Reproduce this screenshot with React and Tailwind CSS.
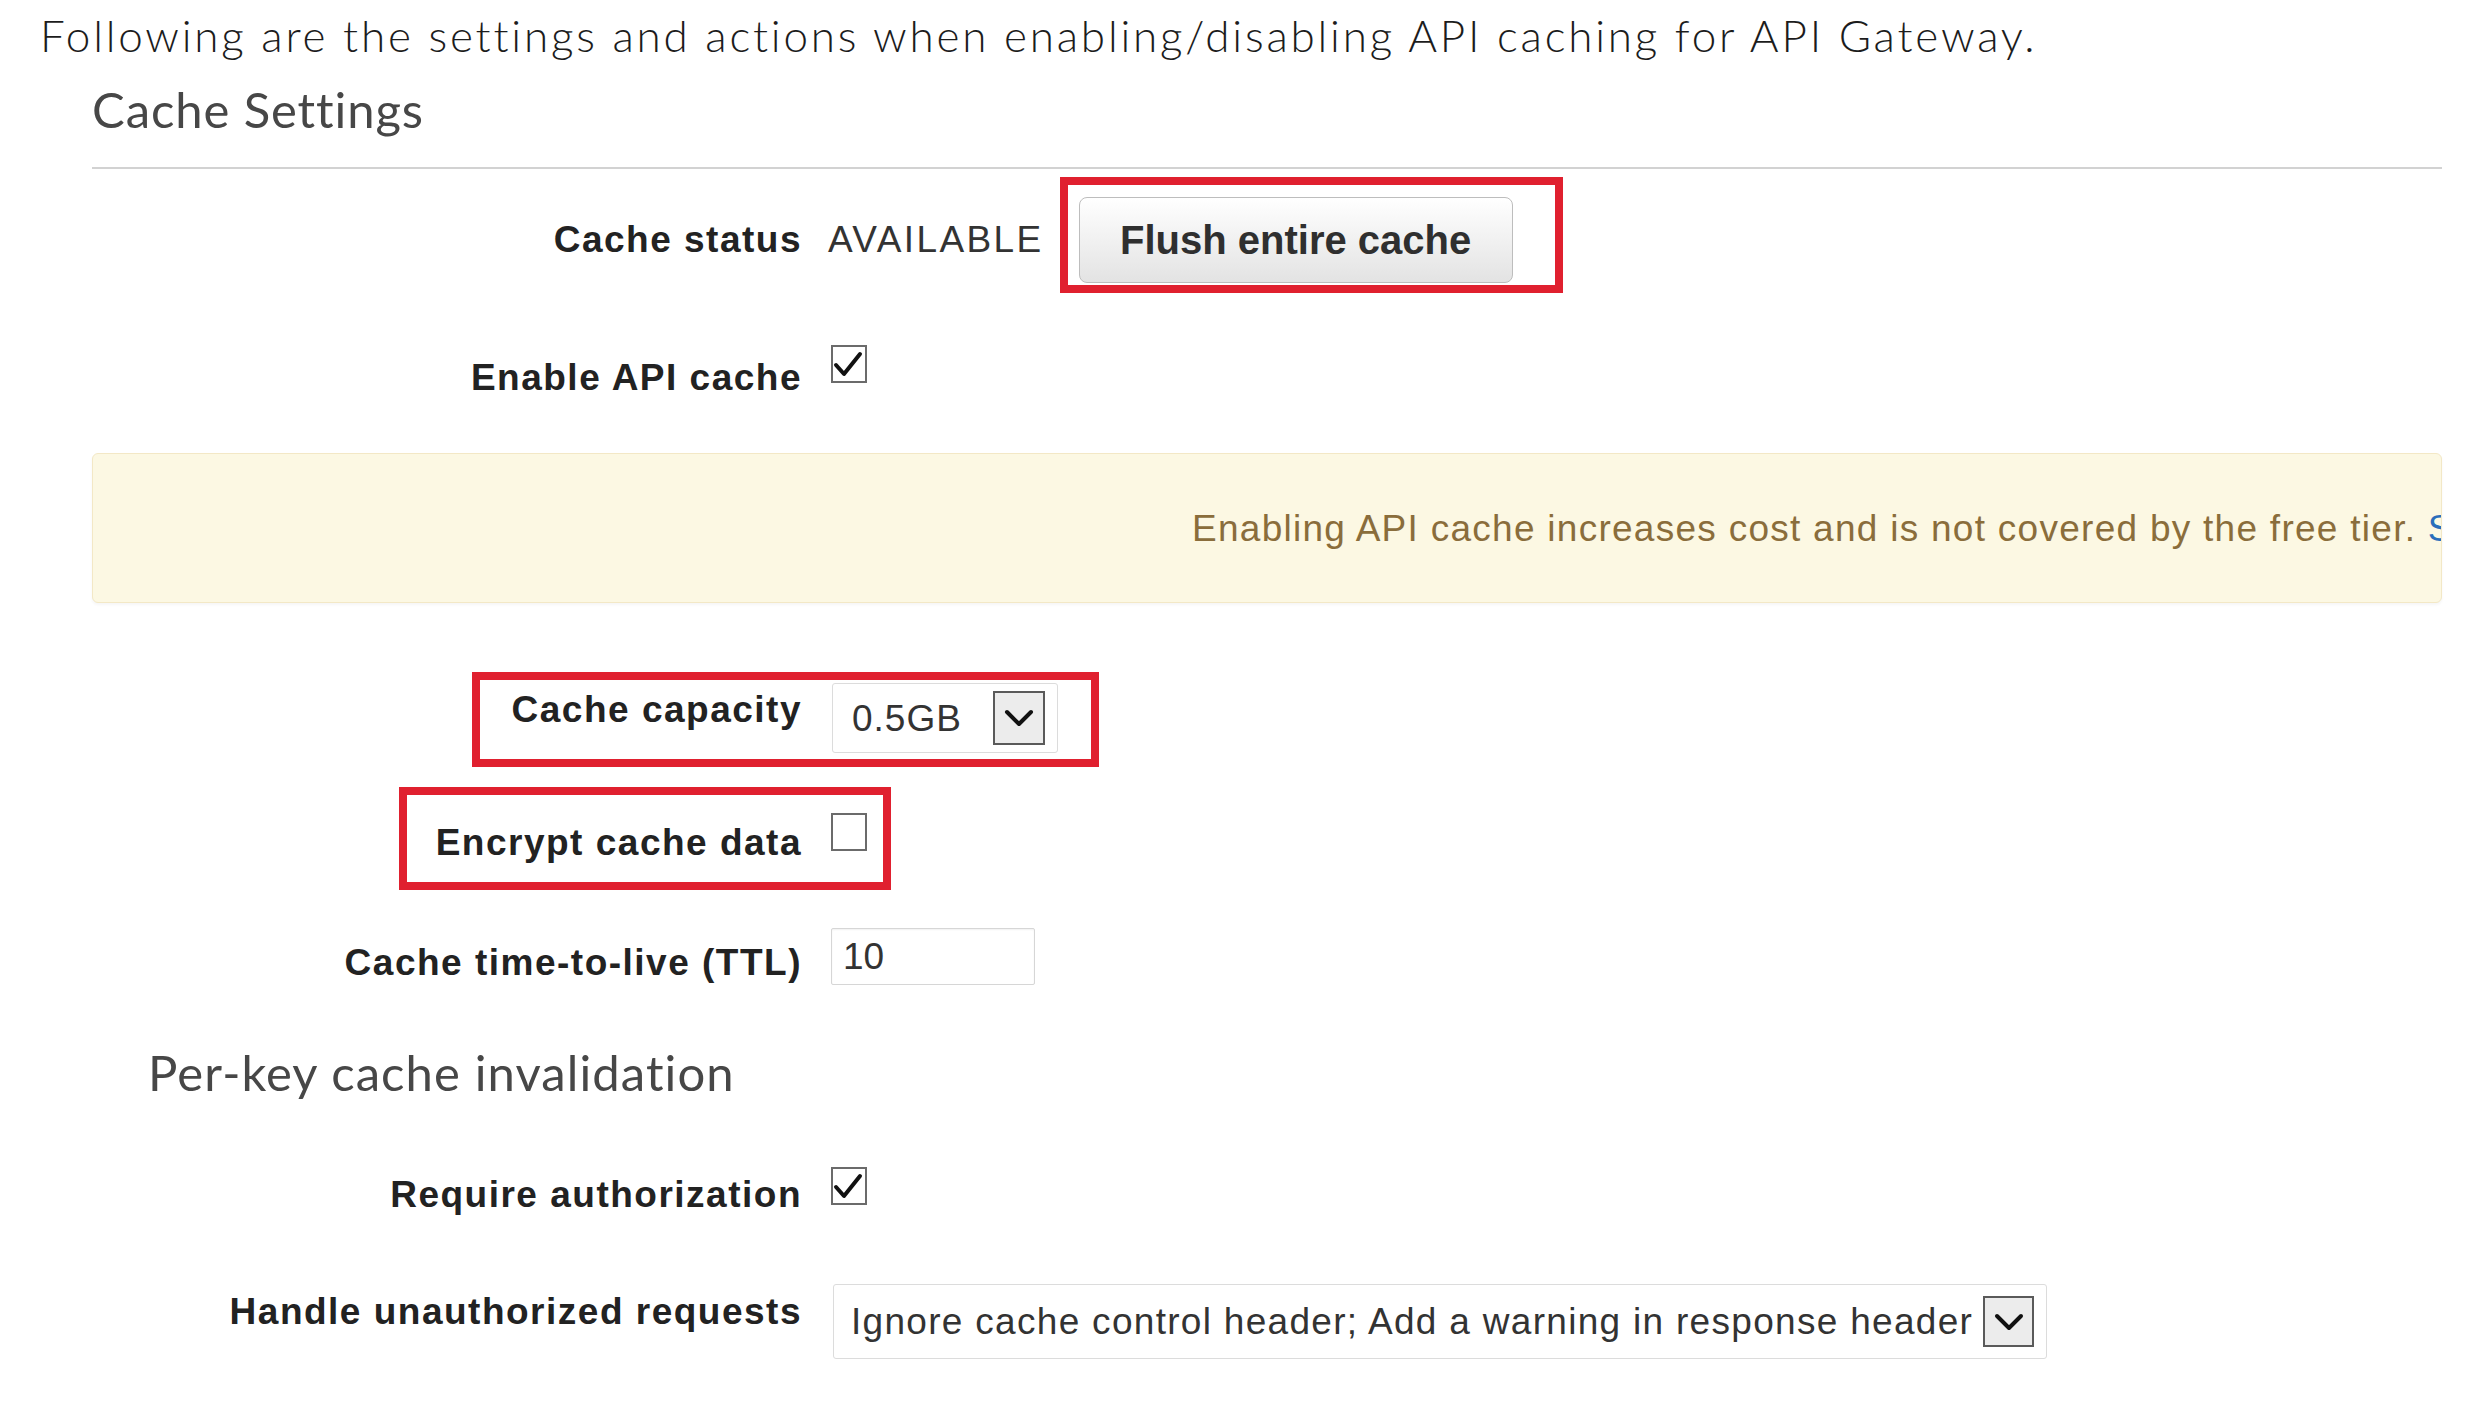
import React from "react";

const sans = "font-['Liberation_Sans',Arial,sans-serif]";
const lato = "font-['Lato',sans-serif]";

function Check({ checked }) {
  return (
    <div className="w-[36px] h-[38px] border-2 border-[#6b6b6b] bg-white">
      {checked && (
        <svg width="32" height="34" viewBox="0 0 32 34">
          <path d="M3 18 L11 27 L27 7" fill="none" stroke="#111" strokeWidth="4" strokeLinecap="round" strokeLinejoin="round" />
        </svg>
      )}
    </div>
  );
}

function Arrow({ w, h }) {
  return (
    <div className={`flex items-center justify-center border-2 border-[#5a5a5a] bg-[#ececec] ${w} ${h}`}>
      <svg width="34" height="22" viewBox="0 0 34 22">
        <path d="M5 5 L17 17 L29 5" fill="none" stroke="#111" strokeWidth="4" strokeLinecap="round" strokeLinejoin="round" />
      </svg>
    </div>
  );
}

function Label({ children, mt }) {
  return (
    <div className={`w-[710px] shrink-0 text-right font-bold text-[37px] leading-none tracking-[1.5px] text-[#222] ${mt}`}>
      {children}
    </div>
  );
}

export default function App() {
  return (
    <div className={`w-[2489px] h-[1401px] bg-white overflow-hidden ${sans}`}>
      {/* intro line */}
      <p className={`${lato} font-light pl-[40px] pt-[13px] text-[44px] leading-none tracking-[2.8px] text-[#1c1c1c] whitespace-nowrap`}>
        Following are the settings and actions when enabling/disabling API caching for API Gateway.
      </p>

      <div className="ml-[92px] w-[2350px]">
        {/* heading */}
        <div className="mt-[28px] pb-[33px] border-b-2 border-[#d2d2d2]">
          <h2 className={`${lato} text-[49px] leading-none tracking-[0.9px] text-[#474747]`}>Cache Settings</h2>
        </div>

        {/* cache status */}
        <div className="relative flex items-start h-[131px]">
          <Label mt="mt-[52px]">Cache status</Label>
          <div className="ml-[26px] flex items-start">
            <span className="mt-[52px] text-[37px] leading-none tracking-[2.4px] text-[#333]">AVAILABLE</span>
            <button className="ml-[35px] mt-[28px] w-[434px] h-[86px] rounded-lg border border-[#bdbdbd] bg-linear-to-b from-white to-[#e3e3e3] font-bold text-[40px] text-[#2f2f2f]">
              Flush entire cache
            </button>
          </div>
          <div className="absolute left-[968px] top-[8px] w-[503px] h-[116px] border-8 border-[#e0202f]" />
        </div>

        {/* enable api cache */}
        <div className="flex items-start h-[153px]">
          <Label mt="mt-[59px]">Enable API cache</Label>
          <div className="ml-[29px] mt-[45px]">
            <Check checked />
          </div>
        </div>

        {/* warning */}
        <div className="h-[150px] flex items-center overflow-hidden rounded-md border border-[#f3e8c6] bg-[#fcf8e3] pl-[1099px] shadow-[0_2px_3px_rgba(0,0,0,0.04)]">
          <span className="whitespace-nowrap text-[37px] leading-none tracking-[1.27px] text-[#8a6d3b]">
            Enabling API cache increases cost and is not covered by the free tier.{" "}
            <span className="text-[#2a6ebb]">See pricing for details.</span>
          </span>
        </div>

        {/* cache capacity */}
        <div className="relative flex items-start h-[172px]">
          <Label mt="mt-[88px]">Cache capacity</Label>
          <div className="ml-[30px] mt-[80px] w-[226px] h-[70px] flex items-center justify-between rounded-[3px] border border-[#dcdcdc] pl-[19px] pr-[12px]">
            <span className="text-[37px] leading-none tracking-[1px] text-[#333]">0.5GB</span>
            <Arrow w="w-[52px]" h="h-[54px]" />
          </div>
          <div className="absolute left-[380px] top-[69px] w-[627px] h-[95px] border-8 border-[#e0202f]" />
        </div>

        {/* encrypt */}
        <div className="relative flex items-start h-[125px]">
          <Label mt="mt-[49px]">Encrypt cache data</Label>
          <div className="ml-[29px] mt-[38px]">
            <Check />
          </div>
          <div className="absolute left-[307px] top-[12px] w-[492px] h-[103px] border-8 border-[#e0202f]" />
        </div>

        {/* ttl */}
        <div className="flex items-start h-[100px]">
          <Label mt="mt-[44px]">Cache time-to-live (TTL)</Label>
          <div className="ml-[29px] mt-[28px] w-[204px] h-[57px] flex items-center rounded-[2px] border border-[#d6d6d6] pl-[11px] shadow-[inset_0_1px_2px_rgba(0,0,0,0.06)]">
            <span className="text-[37px] leading-none text-[#333]">10</span>
          </div>
        </div>

        {/* per-key heading */}
        <h3 className={`${lato} mt-[48px] ml-[56px] text-[49px] leading-none tracking-[1.1px] text-[#474747]`}>Per-key cache invalidation</h3>

        {/* require auth */}
        <div className="flex items-start h-[162px]">
          <Label mt="mt-[79px]">Require authorization</Label>
          <div className="ml-[29px] mt-[70px]">
            <Check checked />
          </div>
        </div>

        {/* handle unauthorized */}
        <div className="flex items-start h-[141px]">
          <Label mt="mt-[34px]">Handle unauthorized requests</Label>
          <div className="ml-[31px] mt-[25px] w-[1214px] h-[75px] flex items-center justify-between rounded-[3px] border border-[#dcdcdc] pl-[17px] pr-[12px]">
            <span className="whitespace-nowrap text-[37px] leading-none tracking-[1.3px] text-[#333]">
              Ignore cache control header; Add a warning in response header
            </span>
            <Arrow w="w-[51px]" h="h-[51px]" />
          </div>
        </div>
      </div>
    </div>
  );
}
